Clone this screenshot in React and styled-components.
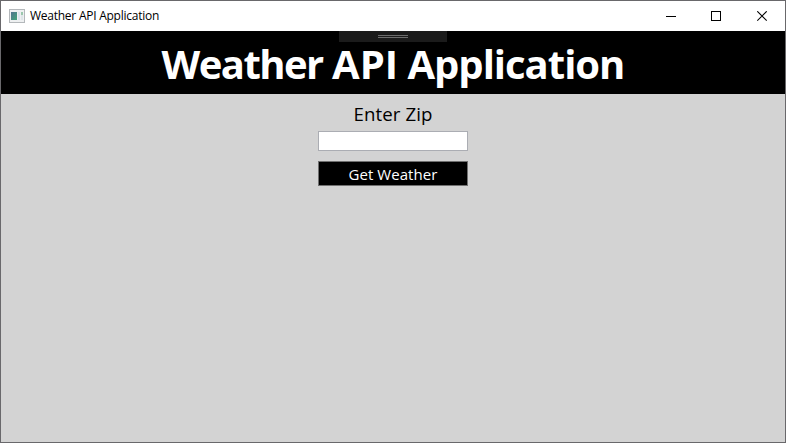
import React from "react";
import styled, { createGlobalStyle } from "styled-components";

const GlobalStyle = createGlobalStyle`
  *, *::before, *::after { box-sizing: border-box; }
  html, body { margin: 0; padding: 0; }
`;

const Window = styled.div`
  display: flex;
  flex-direction: column;
  width: 786px;
  height: 443px;
  border: 1px solid #69686b;
  background: #d3d3d3;
  font-family: "Open Sans", "Noto Sans", sans-serif;
  overflow: hidden;
`;

const TitleBar = styled.header`
  display: flex;
  align-items: center;
  flex: 0 0 30px;
  padding-left: 8px;
  background: #fff;
`;

const AppIcon = styled.svg`
  display: block;
  width: 16px;
  height: 14px;
  margin-right: 5px;
`;

const Caption = styled.span`
  flex: 1;
  font-size: 12px;
  line-height: 16px;
  letter-spacing: -0.25px;
  color: #000;
  white-space: nowrap;
`;

const CaptionButton = styled.button`
  display: flex;
  align-items: center;
  justify-content: center;
  width: ${(p) => p.$width || 46}px;
  height: 30px;
  padding: 0;
  border: 0;
  background: transparent;
`;

const Glyph = styled.svg`
  display: block;
  width: 11px;
  height: 11px;
  fill: none;
  stroke: #000;
`;

const Banner = styled.div`
  position: relative;
  display: flex;
  justify-content: center;
  flex: 0 0 63px;
  background: #000;
`;

const Heading = styled.h1`
  margin: 0;
  padding-top: 6px;
  font-size: 40px;
  font-weight: 700;
  line-height: 54px;
  letter-spacing: -1px;
  color: #fff;
  white-space: nowrap;
`;

const Word = styled.span`
  letter-spacing: ${(p) => p.$tracking}px;
`;

const DebugHandle = styled.div`
  position: absolute;
  top: 0;
  left: 338px;
  display: flex;
  flex-direction: column;
  align-items: center;
  gap: 1px;
  width: 108px;
  height: 11px;
  padding-top: 4px;
  background: #1b1b1b;
`;

const Grip = styled.span`
  width: 30px;
  height: 1px;
  background: #6c6c6c;
`;

const Form = styled.form`
  display: flex;
  flex-direction: column;
  align-items: center;
  padding-top: 7px;
`;

const Label = styled.label`
  height: 30px;
  font-size: 18.67px;
  line-height: 26px;
  letter-spacing: 0.1px;
  color: #000;
  white-space: nowrap;
`;

const ZipInput = styled.input`
  width: 150px;
  height: 20px;
  padding: 0 3px;
  border: 1px solid #abadb3;
  border-radius: 0;
  outline: none;
  background: #fff;
  font: inherit;
  font-size: 12px;
`;

const SubmitButton = styled.button`
  display: flex;
  align-items: center;
  justify-content: center;
  width: 150px;
  height: 25px;
  margin-top: 10px;
  padding: 1px 0 0;
  border: 1px solid #707070;
  background: #000;
  color: #fff;
  font: inherit;
  font-size: 15px;
  line-height: 20px;
  letter-spacing: 0.05px;
  white-space: nowrap;
`;

export default function App() {
  return (
    <>
      <GlobalStyle />
      <Window>
        <TitleBar>
          <AppIcon viewBox="0 0 16 14" aria-hidden="true">
            <defs>
              <linearGradient id="pane" x1="0" y1="0" x2="1" y2="1">
                <stop offset="0" stopColor="#52738f" />
                <stop offset="1" stopColor="#43a579" />
              </linearGradient>
            </defs>
            <rect x="0.5" y="0.5" width="15" height="13" fill="#eef0f1" stroke="#b4b8bb" />
            <rect x="2" y="3" width="6" height="8" fill="url(#pane)" />
            <rect x="9" y="3" width="2" height="8" fill="#dce4ec" />
            <rect x="12" y="3" width="2" height="3" fill="#9bc7ad" />
            <rect x="12" y="6" width="2" height="5" fill="#dfe5e9" />
          </AppIcon>
          <Caption>Weather API Application</Caption>
          <CaptionButton type="button" aria-label="Minimize" $width={45}>
            <Glyph viewBox="0 0 11 11"><path d="M0 5.5h10" shapeRendering="crispEdges" /></Glyph>
          </CaptionButton>
          <CaptionButton type="button" aria-label="Maximize" $width={45}>
            <Glyph viewBox="0 0 11 11"><path d="M.5 .5h9v9h-9z" shapeRendering="crispEdges" /></Glyph>
          </CaptionButton>
          <CaptionButton type="button" aria-label="Close">
            <Glyph viewBox="0 0 11 11"><path d="M.3 .3l9.4 9.4M9.7 .3L.3 9.7" strokeWidth="1.1" /></Glyph>
          </CaptionButton>
        </TitleBar>
        <Banner>
          <DebugHandle>
            <Grip />
            <Grip />
          </DebugHandle>
          <Heading>
            <Word $tracking={-1.55}>Weather</Word> <Word $tracking={0}>API</Word>{" "}
            <Word $tracking={-1}>Application</Word>
          </Heading>
        </Banner>
        <Form>
          <Label htmlFor="zip">Enter Zip</Label>
          <ZipInput id="zip" />
          <SubmitButton type="button">Get Weather</SubmitButton>
        </Form>
      </Window>
    </>
  );
}
